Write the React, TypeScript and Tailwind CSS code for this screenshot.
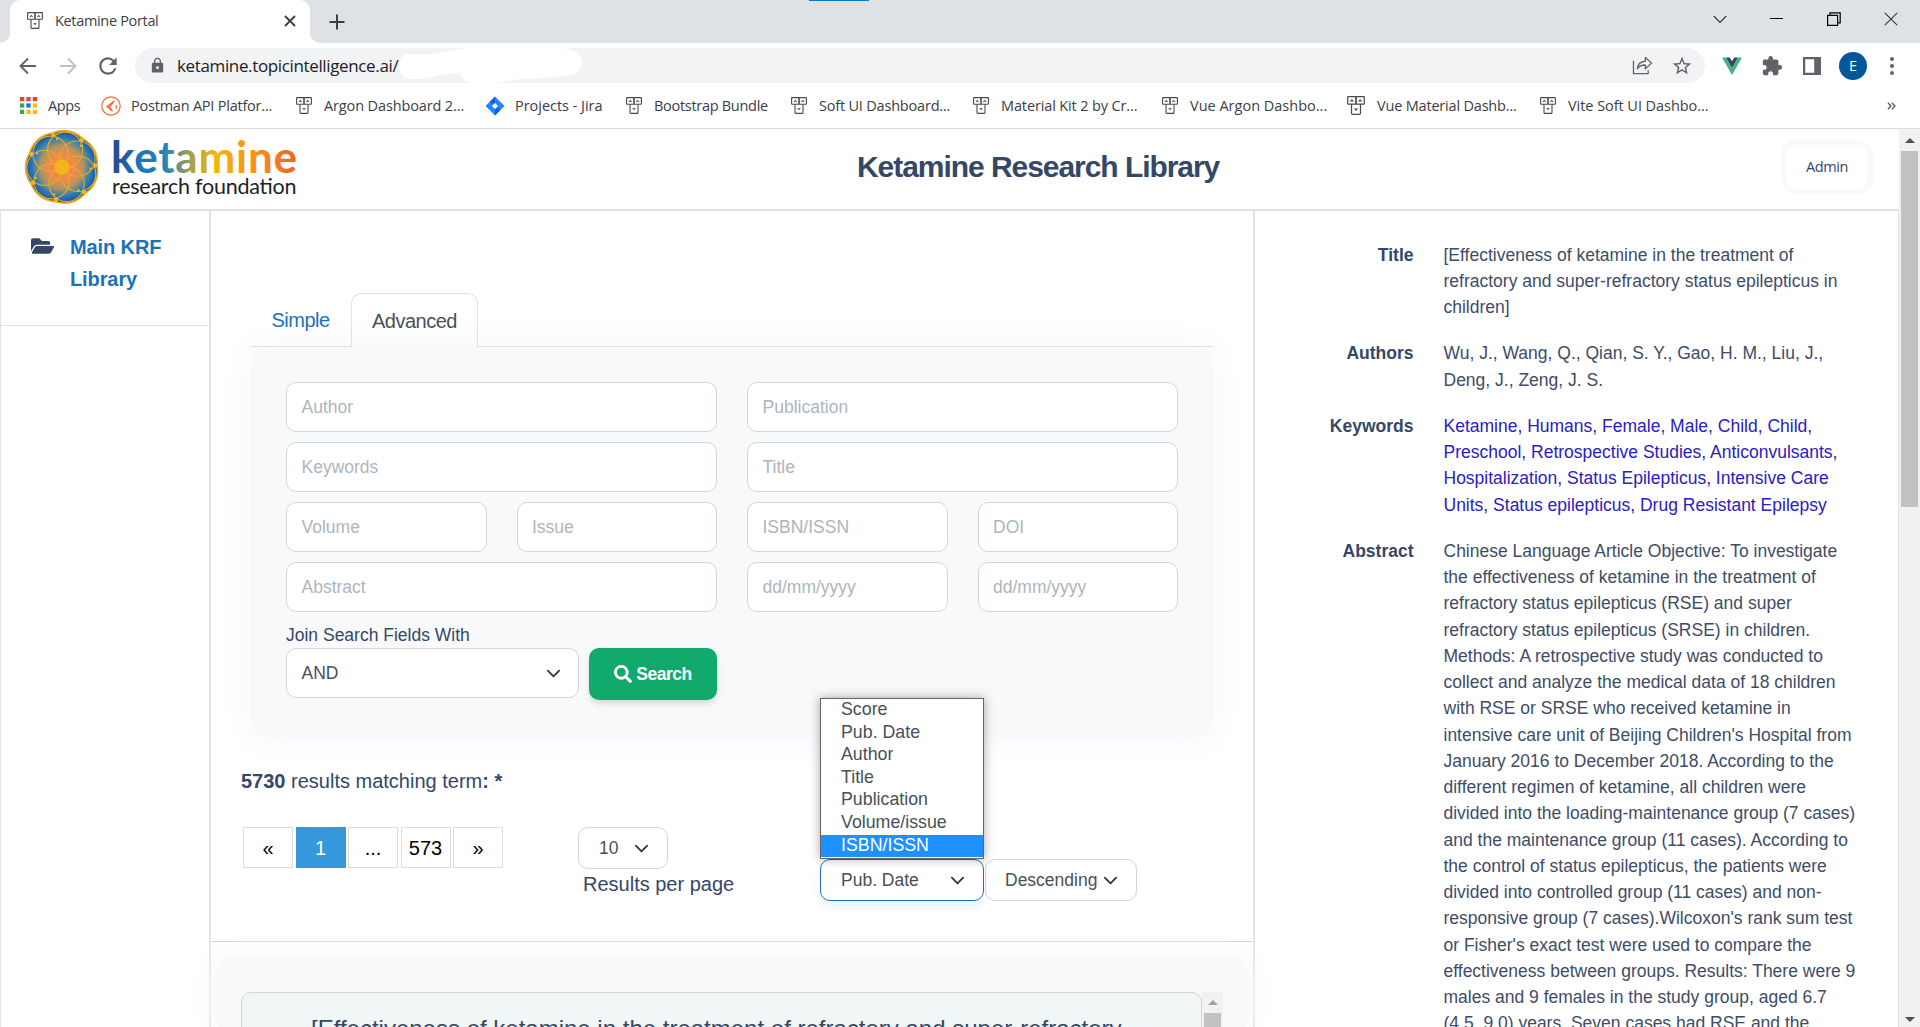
import React from 'react';
import { FaFolderOpen, FaSearch } from 'react-icons/fa';
import { MdExtension, MdLock, MdRefresh, MdStarBorder } from 'react-icons/md';

function FacesIcon({ className = 'w-4 h-[17px]' }: { className?: string }) {
  return (
    <svg viewBox="0 0 16 17" className={`${className} shrink-0`} fill="none" stroke="#4a4a4a" strokeWidth="1.1">
      <rect x="0.6" y="0.6" width="7.4" height="6.6" rx="0.5" />
      <rect x="8" y="0.6" width="7.4" height="6.6" rx="0.5" />
      <path d="M4 7.200v8.200q0 1 1 1h6q1 0 1-1V7.200" />
      <path d="M3 5l1.300-1.500L5.600 5M10.400 5l1.300-1.500L13 5M6.700 11L8 12.500l1.300-1.500" />
    </svg>
  );
}

function AppsIcon() {
  const colors = ['#ea4335', '#ea4335', '#ea4335', '#34a853', '#1a73e8', '#fbbc04', '#34a853', '#fbbc04', '#fbbc04'];
  return (
    <svg viewBox="0 0 16 16" className="h-[17px] w-[17px] shrink-0">
      {colors.map((c, i) => (
        <rect key={i} x={(i % 3) * 6} y={Math.floor(i / 3) * 6} width="4" height="4" fill={c} />
      ))}
    </svg>
  );
}

function PostmanIcon() {
  return (
    <svg viewBox="0 0 20 20" className="h-5 w-5 shrink-0" fill="none" stroke="#f26b3a" strokeWidth="1.2">
      <circle cx="10" cy="10" r="9.2" />
      <path d="M13.500 4.800L6 10.500l5.500 4.700M13.500 4.800L8.500 11l3 3.800M6 10.500h2.500M15.200 9v4" />
    </svg>
  );
}

function JiraIcon() {
  return (
    <svg viewBox="0 0 20 20" className="h-5 w-5 shrink-0">
      <path d="M10 0.500L19.500 10 10 19.500.5 10z" fill="#2684ff" />
      <path d="M10 .5L4.500 6q3.500 3 5.500.8zM10 19.500l5.500-5.500q-3.500-3-5.500-.8z" fill="#1260d8" />
      <path d="M10 7l3 3-3 3-3-3z" fill="#fff" />
    </svg>
  );
}

function Chevron({ className = '' }: { className?: string }) {
  return (
    <svg viewBox="0 0 16 16" className={`h-[15px] w-[15px] shrink-0 ${className}`} fill="none" stroke="#343a40" strokeWidth="2" strokeLinecap="round" strokeLinejoin="round">
      <path d="M2 5l6 6 6-6" />
    </svg>
  );
}

function Logo() {
  const lobes = Array.from({ length: 7 }, (_, i) => {
    const mid = ((-105.4 + 25.7 + i * 51.43) * Math.PI) / 180;
    const dot = ((-105.4 + i * 51.43) * Math.PI) / 180;
    return {
      cx: 17.6 * Math.cos(mid), cy: 17.6 * Math.sin(mid),
      dx: 33.2 * Math.cos(dot), dy: 33.2 * Math.sin(dot),
      sx: 28.5 * Math.cos(dot + 0.1), sy: 28.5 * Math.sin(dot + 0.1),
      ox: 10 * Math.cos(mid), oy: 10 * Math.sin(mid),
    };
  });
  return (
    <svg viewBox="0 0 280 78" className="h-[78px] w-[280px]">
      <defs>
        <radialGradient id="orb" gradientUnits="userSpaceOnUse" cx="0" cy="0" r="37">
          <stop offset="0" stopColor="#ff7a3c" />
          <stop offset="0.35" stopColor="#f08a4b" />
          <stop offset="0.58" stopColor="#b2935f" />
          <stop offset="0.78" stopColor="#2f7fb5" />
          <stop offset="0.9" stopColor="#1c62ae" />
          <stop offset="1" stopColor="#27307f" />
        </radialGradient>
        <linearGradient id="word" gradientUnits="userSpaceOnUse" x1="92" y1="0" x2="276" y2="0">
          <stop offset="0" stopColor="#27478f" />
          <stop offset="0.15" stopColor="#1c75bc" />
          <stop offset="0.28" stopColor="#2481bb" />
          <stop offset="0.42" stopColor="#9aa152" />
          <stop offset="0.56" stopColor="#f5b50c" />
          <stop offset="0.78" stopColor="#f7901c" />
          <stop offset="1" stopColor="#f26522" />
        </linearGradient>
      </defs>
      <g transform="translate(42 39)">
        {lobes.map((l, i) => (
          <circle key={i} cx={l.ox} cy={l.oy} r="26.300" fill="none" stroke="#e8b020" strokeWidth="2" />
        ))}
        {lobes.map((l, i) => (
          <circle key={i} cx={l.ox} cy={l.oy} r="25.700" fill="url(#orb)" />
        ))}
        {lobes.map((l, i) => (
          <g key={i} fill="#f2b418">
            <circle cx={l.cx} cy={l.cy} r="17.600" fill="none" stroke="#e3ac2c" strokeWidth="1.100" />
            <circle cx={l.dx} cy={l.dy} r="2.300" />
            <circle cx={l.sx} cy={l.sy} r="1.200" />
          </g>
        ))}
        <circle r="7.800" fill="#f2b418" />
      </g>
      <text x="91" y="45" fontFamily="Lato, sans-serif" fontWeight="700" fontSize="44" textLength="186" fill="url(#word)">ketamine</text>
      <text x="92" y="66" fontFamily="Lato, sans-serif" fontSize="21.500" textLength="184.500" fill="#231f20">research foundation</text>
    </svg>
  );
}

function TabStrip() {
  return (
    <div className="relative flex h-[43px] shrink-0 items-stretch bg-[#dee1e6]">
      <div className="absolute top-0 left-[809px] flex h-px w-[301px] bg-[#e6e6e6]">
        <div className="w-[60px] bg-[#0078d7]" />
      </div>
      <div className="flex w-2.5 items-end bg-white">
        <div className="h-full w-full rounded-br-[10px] bg-[#dee1e6]" />
      </div>
      <div className="w-[300px] bg-[#dee1e6]">
        <div className="flex h-full items-center rounded-t-[10px] bg-white pb-[2px] pl-[17px] pr-[13px]">
          <FacesIcon />
          <span className="ml-3 flex-1 text-[14.5px] tracking-[-0.33px] text-[#3c4043]">Ketamine Portal</span>
          <svg viewBox="0 0 14 14" className="h-[14px] w-[14px]" stroke="#3c4043" strokeWidth="1.900"><path d="M2 2l10 10M12 2L2 12" /></svg>
        </div>
      </div>
      <div className="w-2.5 bg-white"><div className="h-full rounded-bl-[10px] bg-[#dee1e6]" /></div>
      <div className="flex w-[34px] items-center justify-center">
        <svg viewBox="0 0 16 16" className="h-4 w-4" stroke="#3c4043" strokeWidth="2"><path d="M8 .5v15M.5 8h15" /></svg>
      </div>
      <div className="flex flex-1 items-center justify-end gap-[43.5px] pr-[22px] pb-[6px]">
        <svg viewBox="0 0 14 14" className="h-[14px] w-[14px]" fill="none" stroke="#333" strokeWidth="1.100"><path d="M.8 4L7 10.500 13.200 4" /></svg>
        <div className="h-px w-[13px] bg-black" />
        <svg viewBox="0 0 14 14" className="h-[14px] w-[14px]" fill="none" stroke="#000" strokeWidth="1.200"><path d="M.6 3.400h10v10H.6zM3 3.400V.8h10.200v10h-2.600" /></svg>
        <svg viewBox="0 0 14 14" className="h-[14px] w-[14px]" stroke="#333" strokeWidth="1.100"><path d="M.8.8l12.400 12.400M13.200.8L.8 13.200" /></svg>
      </div>
    </div>
  );
}

function Toolbar() {
  return (
    <div className="flex h-[45px] shrink-0 items-center bg-white">
      <svg viewBox="0 0 18 18" className="ml-[19px] h-[18px] w-[18px]" fill="none" stroke="#5f6368" strokeWidth="1.900"><path d="M17 9H2M9 1.500L1.500 9 9 16.500" /></svg>
      <svg viewBox="0 0 18 18" className="ml-[22px] h-[18px] w-[18px]" fill="none" stroke="#bdbfc1" strokeWidth="1.900"><path d="M1 9h15M9 1.500L16.500 9 9 16.500" /></svg>
      <MdRefresh className="ml-[18px] h-[26px] w-[26px] text-[#5f6368]" />
      <div className="relative ml-[14px] flex h-[35px] w-[1570px] items-center rounded-full bg-[#f1f3f4] pl-[14px] pr-[12px]">
        <MdLock className="h-[17px] w-[17px] text-[#5f6368]" />
        <span className="ml-[11px] flex-1 text-[17px] tracking-[-0.36px] text-[#202124]">ketamine.topicintelligence.ai/</span>
        <svg viewBox="0 0 190 36" className="absolute top-0 left-[262px] h-9 w-[190px]" fill="#fff">
          <path d="M10 6Q2 8 2 18T10 31Q30 32 42 27L62 25Q66 34 75 35Q90 36 107 34Q120 30 148 30L175 27Q185 24 185 14Q183 2 165 0H70Q50 3 36 6Z" />
        </svg>
        <svg viewBox="0 0 22 20" className="h-[19px] w-[21px]" fill="none" stroke="#5f6368" strokeWidth="1.400" strokeLinejoin="round">
          <path d="M1.500 5v13.500H17V15" /><path d="M5.500 13.500Q6 6 14 5.500V1.500L20.500 7.500 14 13.500V9.500Q8 9.500 5.500 13.500z" />
        </svg>
        <MdStarBorder className="ml-[18px] h-[22px] w-[22px] text-[#5f6368]" />
      </div>
      <svg viewBox="0 0 20 18" className="ml-[17px] h-[18px] w-5"><path d="M0 .5h4L10 11l6-10.500h4L10 18z" fill="#41b883" /><path d="M4 .5h3.800L10 4.300 12.200.5H16L10 11z" fill="#34495e" /></svg>
      <MdExtension className="ml-[19px] h-[22px] w-[22px] text-[#5f6368]" />
      <svg viewBox="0 0 18 18" className="ml-5 h-[18px] w-[18px]"><path d="M0 0h18v18H0zM2.200 2.200v13.600h9V2.200z" fill="#5f6368" fillRule="evenodd" /></svg>
      <div className="ml-[18px] flex h-7 w-7 items-center justify-center rounded-full bg-[#01579b] text-[14.5px] text-white">E</div>
      <div className="ml-[23px] flex flex-col gap-[3px]">
        <div className="h-[4px] w-[4px] rounded-full bg-[#5f6368]" />
        <div className="h-[4px] w-[4px] rounded-full bg-[#5f6368]" />
        <div className="h-[4px] w-[4px] rounded-full bg-[#5f6368]" />
      </div>
    </div>
  );
}

const bookmarks = [
  { label: 'Apps', icon: <AppsIcon />, cls: 'w-[81px] gap-[11px] tracking-[-0.35px]' },
  { label: 'Postman API Platfor...', icon: <PostmanIcon />, cls: 'w-[195px] gap-[10px] tracking-[-0.22px]' },
  { label: 'Argon Dashboard 2...', icon: <FacesIcon />, cls: 'w-[189px] gap-[12px] tracking-[-0.13px]' },
  { label: 'Projects - Jira', icon: <JiraIcon />, cls: 'w-[141px] gap-[10px] tracking-[-0.03px]' },
  { label: 'Bootstrap Bundle', icon: <FacesIcon />, cls: 'w-[165px] gap-[12px] tracking-[-0.29px]' },
  { label: 'Soft UI Dashboard...', icon: <FacesIcon />, cls: 'w-[182px] gap-[12px] tracking-[-0.2px]' },
  { label: 'Material Kit 2 by Cr...', icon: <FacesIcon />, cls: 'w-[189px] gap-[12px] tracking-[-0.13px]' },
  { label: 'Vue Argon Dashbo...', icon: <FacesIcon />, cls: 'w-[185px] gap-[12px]' },
  { label: 'Vue Material Dashb...', icon: <FacesIcon className="h-[19px] w-[18px]" />, cls: 'w-[193px] gap-[12px] tracking-[-0.19px]' },
  { label: 'Vite Soft UI Dashbo...', icon: <FacesIcon />, cls: 'w-[180px] gap-[12px] tracking-[-0.05px]' },
];

function Bookmarks() {
  return (
    <div className="flex h-[41px] shrink-0 items-center border-b border-[#d9dbde] bg-white pl-5 pb-[5px] text-[14.5px] text-[#3c4043]">
      {bookmarks.map((b) => (
        <div key={b.label} className={`flex shrink-0 items-center whitespace-nowrap ${b.cls}`}>
          {b.icon}
          <span>{b.label}</span>
        </div>
      ))}
      <svg viewBox="0 0 10 8" className="ml-[167px] h-2 w-[9px]" fill="none" stroke="#5f6368" strokeWidth="1.600"><path d="M1 .5L4.300 4 1 7.500M5.500.5L8.800 4 5.500 7.500" /></svg>
    </div>
  );
}

function Field({ label, wide }: { label: string; wide?: boolean }) {
  return (
    <div className={`flex h-[50px] items-center rounded-[10px] border border-[#d2d6da] bg-white px-[14.5px] text-[17.5px] text-[#adb5bd] ${wide ? 'col-span-2' : ''}`}>
      {label}
    </div>
  );
}

const sortOptions = ['Score', 'Pub. Date', 'Author', 'Title', 'Publication', 'Volume/issue', 'ISBN/ISSN'];

function PageBox({ children, active }: { children: React.ReactNode; active?: boolean }) {
  return (
    <div className={`flex h-[41px] w-[50px] items-center justify-center border text-[20px] ${active ? 'border-[#3498db] bg-[#3498db] text-white' : 'border-[#ddd] bg-white text-black'}`}>
      {children}
    </div>
  );
}

function Center() {
  return (
    <main className="relative z-10 flex w-[1042px] shrink-0 flex-col pt-[82px]">
      <div className="relative z-10 mx-10 flex h-[54px] shrink-0 text-[20px] tracking-[-0.5px]">
        <div className="flex w-[100px] items-center border-b border-[#dee2e6] pl-[20.5px] text-[#1b72ba]">Simple</div>
        <div className="flex w-[127px] items-center justify-center rounded-t-[10px] border border-b-0 border-[#dee2e6] text-[#495057]">Advanced</div>
        <div className="flex-1 border-b border-[#dee2e6]" />
      </div>
      <div className="mx-10 h-[391px] shrink-0 rounded-[20px] bg-[#f8f9fb] px-[35px] pt-[35px] shadow-[0_0_32px_10px_#f8fafb]">
        <div className="grid grid-cols-4 gap-x-[30px] gap-y-[10px]">
          <Field label="Author" wide />
          <Field label="Publication" wide />
          <Field label="Keywords" wide />
          <Field label="Title" wide />
          <Field label="Volume" />
          <Field label="Issue" />
          <Field label="ISBN/ISSN" />
          <Field label="DOI" />
          <Field label="Abstract" wide />
          <Field label="dd/mm/yyyy" />
          <Field label="dd/mm/yyyy" />
        </div>
        <div className="mt-[10px] h-[26px] text-[17.5px] leading-[26px] text-[#344767]">Join Search Fields With</div>
        <div className="flex items-start gap-[10px]">
          <div className="flex h-[50px] w-[293px] items-center justify-between rounded-[10px] border border-[#d2d6da] bg-white pl-[14.5px] pr-[17px] text-[17.5px] text-[#495057]">
            AND
            <Chevron />
          </div>
          <div className="flex h-[52px] w-[128px] items-center justify-center gap-[4px] rounded-[10px] bg-[#12a96d] text-[17.5px] font-bold tracking-[-0.5px] text-white shadow-[0_4px_7px_-1px_rgba(0,0,0,0.15)]">
            <FaSearch className="h-[18px] w-[18px]" />
            Search
          </div>
        </div>
      </div>
      <div className="ml-[30px] mt-[28px] h-[30px] shrink-0 text-[20px] leading-[30px] text-[#344767]">
        <b>5730</b> results matching term<b>: *</b>
      </div>
      <div className="mt-[31px] flex h-[114px] shrink-0 items-start pl-8">
        <div className="flex w-[335px] gap-[2.5px]">
          <PageBox>«</PageBox>
          <PageBox active>1</PageBox>
          <PageBox>...</PageBox>
          <PageBox>573</PageBox>
          <PageBox>»</PageBox>
        </div>
        <div className="w-[242px] text-[#344767]">
          <div className="flex h-[42px] w-[90px] items-center justify-between rounded-[10px] border border-[#d2d6da] bg-white pl-[20px] pr-[18px] text-[17.5px] text-[#495057]">
            10
            <Chevron />
          </div>
          <div className="pl-[5px] text-[20px] leading-[30px]">Results per page</div>
        </div>
        <div className="mt-8 flex text-[17.5px] text-[#495057]">
          <div className="relative flex h-[42px] w-[164px] items-center justify-between rounded-[10px] border border-[#1b72ba] bg-white pl-[20px] pr-[18px] shadow-[0_6px_10px_rgba(90,120,240,0.1)]">
            Pub. Date
            <Chevron />
            <div className="absolute -left-px bottom-[41px] h-[161px] w-[164px] border border-[#666] bg-white shadow-[0_0_10px_rgba(0,0,0,0.35)]">
              {sortOptions.map((o) => (
                <div key={o} className={`h-[22.6px] pl-[20px] text-[17.8px] leading-[21px] ${o === 'ISBN/ISSN' ? 'bg-[#1e90ff] text-white' : ''}`}>
                  {o}
                </div>
              ))}
            </div>
          </div>
          <div className="ml-px flex h-[42px] w-[152px] items-center gap-[6px] rounded-[10px] border border-[#d2d6da] bg-white pl-[19px]">
            Descending
            <Chevron />
          </div>
        </div>
      </div>
      <div className="h-px shrink-0 bg-[#c8ccd4]" />
      <div className="mx-[4px] mt-[14px] flex h-[80px] shrink-0 items-start rounded-[20px] bg-[#f8f9fb] pl-[26px] pt-[36px] shadow-[0_0_30px_8px_#f8fafb]">
        <div className="h-[60px] w-[961px] rounded-t-[10px] border border-[#d2d6da] bg-[#f1f6f6] pl-[69px] pt-[18px] text-[24px] leading-[36px] text-[#344767]">
          [Effectiveness of ketamine in the treatment of refractory and super-refractory
        </div>
        <div className="flex h-[60px] w-[21px] flex-col items-center bg-[#f1f1f1] pt-[8px]">
          <div className="h-0 w-0 border-x-[5px] border-b-[5px] border-x-transparent border-b-[#a3a3a3]" />
          <div className="mt-[8px] w-[17px] flex-1 bg-[#c1c1c1]" />
        </div>
      </div>
    </main>
  );
}

function Detail({ label, lines, link }: { label: string; lines: string[]; link?: boolean }) {
  return (
    <div className="mb-5 flex text-[17.5px] leading-[26.25px]">
      <div className="w-[158.5px] shrink-0 text-right font-bold text-[#344767]">{label}</div>
      <div className={`ml-[30px] whitespace-nowrap ${link ? 'text-[#2a20c4]' : 'text-[#3e4c66]'}`}>
        {lines.map((l) => <div key={l}>{l}</div>)}
      </div>
    </div>
  );
}

const abstractLines = [
  'Chinese Language Article Objective: To investigate',
  'the effectiveness of ketamine in the treatment of',
  'refractory status epilepticus (RSE) and super',
  'refractory status epilepticus (SRSE) in children.',
  'Methods: A retrospective study was conducted to',
  'collect and analyze the medical data of 18 children',
  'with RSE or SRSE who received ketamine in',
  "intensive care unit of Beijing Children's Hospital from",
  'January 2016 to December 2018. According to the',
  'different regimen of ketamine, all children were',
  'divided into the loading-maintenance group (7 cases)',
  'and the maintenance group (11 cases). According to',
  'the control of status epilepticus, the patients were',
  'divided into controlled group (11 cases) and non-',
  "responsive group (7 cases).Wilcoxon's rank sum test",
  "or Fisher's exact test were used to compare the",
  'effectiveness between groups. Results: There were 9',
  'males and 9 females in the study group, aged 6.7',
  '(4.5, 9.0) years. Seven cases had RSE and the',
];

export default function App() {
  return (
    <div className="flex h-[1027px] w-[1920px] flex-col overflow-hidden bg-white font-['Open_Sans',sans-serif]">
      <TabStrip />
      <Toolbar />
      <Bookmarks />
      <div className="flex h-[898px] font-['Liberation_Sans',Arial,sans-serif]">
        <div className="flex w-[1899px] flex-col">
          <header className="flex h-[82px] shrink-0 items-center border-b-2 border-[#dee2e6] pl-[20px] pr-[26px]">
            <div className="w-[837px] pb-[5px]"><Logo /></div>
            <h1 className="pb-[6px] text-[30px] font-bold tracking-[-1.05px] text-[#344767]">Ketamine Research Library</h1>
            <div className="flex flex-1 justify-end pb-[5px]">
              <div className="flex h-[54px] w-[92px] items-center justify-center rounded-[15px] border-[5px] border-[#f8f9fb] font-['Open_Sans',sans-serif] text-[14.5px] tracking-[-0.4px] text-[#344767]">Admin</div>
            </div>
          </header>
          <div className="flex h-[816px] border-r border-[#dee2e6]">
            <aside className="w-[211px] shrink-0 border-l border-r-2 border-[#dee2e6]">
              <div className="flex h-[115px] border-b border-[#dee2e6] pl-[30px] pt-[20px]">
                <FaFolderOpen className="mt-[4px] h-[22px] w-[23px] text-[#344767]" />
                <div className="ml-[16px] text-[20px] font-bold leading-[32px] tracking-[-0.1px] text-[#1b72ba]">Main KRF<br />Library</div>
              </div>
            </aside>
            <Center />
            <section className="flex-1 border-l-2 border-[#dee2e6] pt-[30.5px]">
              <Detail label="Title" lines={['[Effectiveness of ketamine in the treatment of', 'refractory and super-refractory status epilepticus in', 'children]']} />
              <Detail label="Authors" lines={['Wu, J., Wang, Q., Qian, S. Y., Gao, H. M., Liu, J.,', 'Deng, J., Zeng, J. S.']} />
              <Detail link label="Keywords" lines={['Ketamine, Humans, Female, Male, Child, Child,', 'Preschool, Retrospective Studies, Anticonvulsants,', 'Hospitalization, Status Epilepticus, Intensive Care', 'Units, Status epilepticus, Drug Resistant Epilepsy']} />
              <Detail label="Abstract" lines={abstractLines} />
            </section>
          </div>
        </div>
        <div className="flex w-[21px] flex-col items-center justify-between bg-[#f1f1f1] pb-[5px] pt-[9px]">
          <div className="flex flex-col items-center">
            <div className="h-0 w-0 border-x-[5px] border-b-[5px] border-x-transparent border-b-[#505050]" />
            <div className="mt-[8px] h-[356px] w-[17px] bg-[#c1c1c1]" />
          </div>
          <div className="h-0 w-0 border-x-[5px] border-t-[5px] border-x-transparent border-t-[#505050]" />
        </div>
      </div>
    </div>
  );
}
